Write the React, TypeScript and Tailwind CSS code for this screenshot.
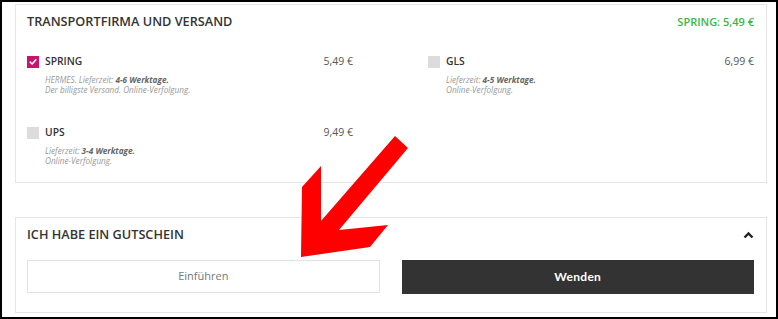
import React from "react";

const carriers = [
  {
    name: "SPRING",
    price: "5,49 €",
    checked: true,
    prefix: "HERMES. Lieferzeit: ",
    days: "4-6 Werktage.",
    extra: "Der billigste Versand. Online-Verfolgung.",
  },
  {
    name: "GLS",
    price: "6,99 €",
    checked: false,
    prefix: "Lieferzeit: ",
    days: "4-5 Werktage.",
    extra: "Online-Verfolgung.",
  },
  {
    name: "UPS",
    price: "9,49 €",
    checked: false,
    prefix: "Lieferzeit: ",
    days: "3-4 Werktage.",
    extra: "Online-Verfolgung.",
  },
];

const Checkbox = ({ checked }: { checked: boolean }) =>
  checked ? (
    <div className="w-[12px] h-[12px] bg-[#c8146c] flex items-center justify-center shrink-0">
      <svg width="8" height="8" viewBox="0 0 8 8" fill="none">
        <path d="M1.2 4.2 L3.2 6 L6.8 1.8" stroke="white" strokeWidth="1.6" strokeLinecap="round" strokeLinejoin="round" />
      </svg>
    </div>
  ) : (
    <div className="w-[12px] h-[12px] bg-[#dcdcdc] shrink-0" />
  );

export default function App() {
  return (
    <div className="relative w-[778px] h-[319px] font-['Open_Sans',sans-serif] bg-white">
      <div className="w-full h-full border-2 border-black pt-[2px] pl-[13px] pr-[9px]">
        {/* shipping */}
        <div className="border border-[#e6e6e6] pt-[8px] pl-[11px] pr-[12px] pb-[14px] h-[179px]">
          <div className="flex items-center justify-between h-[18px]">
            <h2 className="text-[12.7px] font-semibold text-[#333]">TRANSPORTFIRMA UND VERSAND</h2>
            <span className="text-[11px] font-semibold text-[#3db54a]">SPRING: 5,49 €</span>
          </div>
          <div className="grid grid-cols-2 gap-x-[75px] gap-y-[31px] mt-[24px]">
            {carriers.map((c) => (
              <div key={c.name}>
                <div className="flex items-center h-[14px]">
                  <Checkbox checked={c.checked} />
                  <span className="ml-[6px] text-[10.3px] font-semibold text-[#333]">{c.name}</span>
                  <span className="ml-auto text-[10.5px] text-[#555]">{c.price}</span>
                </div>
                <div className="mt-[6px] pl-[18px] text-[8.2px] italic text-[#999] leading-[10px]">
                  <div>
                    {c.prefix}
                    <b className="text-[#666]">{c.days}</b>
                  </div>
                  <div>{c.extra}</div>
                </div>
              </div>
            ))}
          </div>
        </div>

        {/* voucher */}
        <div className="mt-[34px] border border-[#e6e6e6] pt-[8px] pl-[11px] pr-[12px] pb-[18px]">
          <div className="flex items-center justify-between h-[18px]">
            <h2 className="text-[12.7px] font-semibold text-[#333]">ICH HABE EIN GUTSCHEIN</h2>
            <svg width="11" height="8" viewBox="0 0 11 8" fill="none">
              <path d="M1.5 6.5 L5.5 2.5 L9.5 6.5" stroke="#222" strokeWidth="2.4" />
            </svg>
          </div>
          <div className="grid grid-cols-2 gap-x-[22px] mt-[16px]">
            <div className="h-[33px] border border-[#e2e2e2] flex items-center justify-center text-[11px] text-[#777]">
              Einführen
            </div>
            <button className="h-[34px] bg-[#333] text-white text-[12px] font-bold font-['Lato',sans-serif] tracking-[0.3px]">
              Wenden
            </button>
          </div>
        </div>
      </div>

      <svg className="absolute inset-0 pointer-events-none" width="778" height="319" viewBox="0 0 778 319">
        <polygon
          points="301,257 302,187 321,166 321,221 395,136 408,148 339,230 388,225 370,247"
          fill="#ff0000"
        />
      </svg>
    </div>
  );
}
